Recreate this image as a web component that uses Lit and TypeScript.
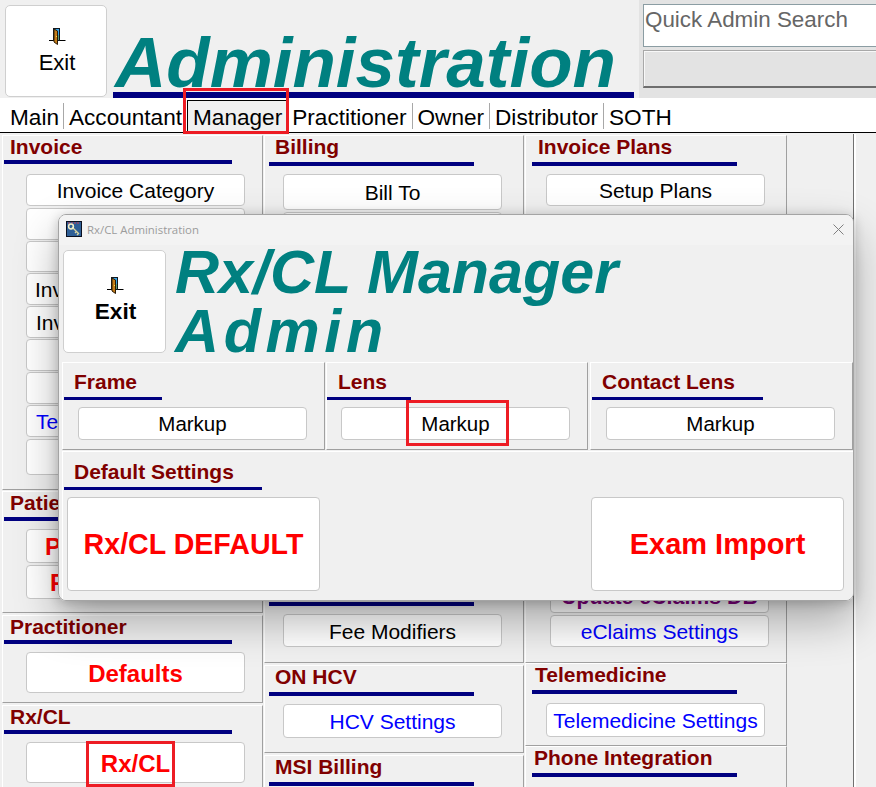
import { LitElement, html, css, nothing } from "lit";
import { customElement } from "lit/decorators.js";

// --- Types ---

type Tone = "black" | "red" | "blue" | "purple";

interface Btn {
  label?: string;
  h: number;
  gap: number; // space above the button
  tone?: Tone;
  bold?: boolean;
  textPad?: number; // only the start of the label shows next to the dialog
  dx?: number;
}

interface Section {
  title?: string;
  height: number;
  gapTop?: number;
  gapLeft?: number;
  width?: number;
  headH: number;
  headTop?: number;
  textX: number;
  ulX: number;
  ulW: number;
  btnX?: number;
  btnW?: number;
  buttons?: Btn[];
}

// --- Data ---

const b = (label: string | undefined, h: number, gap: number, extra: Partial<Btn> = {}): Btn => ({
  label, h, gap, ...extra,
});

const COLUMNS: { cls: string; sections: Section[] }[] = [
  {
    cls: "col-a",
    sections: [
      {
        title: "Invoice", height: 355, headH: 24, textX: 6, ulX: 1, ulW: 228, btnX: 23, btnW: 219,
        buttons: [
          b("Invoice Category", 32, 10),
          b(undefined, 32, 2),
          b(undefined, 31, 1),
          b("Inv", 32, 1, { textPad: 8 }),
          b("Inv", 32, 1, { textPad: 9 }),
          b(undefined, 32, 1),
          b(undefined, 32, 1),
          b("Te", 32, 1, { tone: "blue", textPad: 9 }),
          b(undefined, 36, 2),
        ],
      },
      {
        title: "Patient", height: 122, gapTop: 1, headH: 25, textX: 6, ulX: 1, ulW: 228, btnX: 23, btnW: 219,
        buttons: [
          b("P", 34, 8, { tone: "red", bold: true, textPad: 18 }),
          b("P", 34, 2, { tone: "red", bold: true, textPad: 23 }),
        ],
      },
      {
        title: "Practitioner", height: 88, gapTop: 2, headH: 24, textX: 6, ulX: 1, ulW: 228, btnX: 23, btnW: 219,
        buttons: [b("Defaults", 41, 8, { tone: "red", bold: true })],
      },
      {
        title: "Rx/CL", height: 90, gapTop: 2, headH: 24, textX: 6, ulX: 1, ulW: 228, btnX: 23, btnW: 219,
        buttons: [b("Rx/CL", 41, 8, { tone: "red", bold: true })],
      },
    ],
  },
  {
    cls: "col-b",
    sections: [
      {
        title: "Billing", height: 439, headH: 26, textX: 6, ulX: 4, ulW: 205, btnX: 18, btnW: 219,
        buttons: [b("Bill To", 36, 8), b(undefined, 36, 2)],
      },
      {
        height: 87, gapTop: 2, headH: 25, textX: 6, ulX: 4, ulW: 205, btnX: 18, btnW: 219,
        buttons: [b("Fee Modifiers", 33, 8)],
      },
      {
        title: "ON HCV", height: 88, gapTop: 2, headH: 26, textX: 6, ulX: 4, ulW: 205, btnX: 18, btnW: 219,
        buttons: [b("HCV Settings", 34, 8, { tone: "blue" })],
      },
      { title: "MSI Billing", height: 60, gapTop: 2, headH: 26, textX: 6, ulX: 4, ulW: 205 },
    ],
  },
  {
    cls: "col-c",
    sections: [
      {
        title: "Invoice Plans", height: 528, headH: 26, textX: 6, ulX: 6, ulW: 205, btnX: 20, btnW: 219,
        buttons: [
          b("Setup Plans", 32, 8),
          b("Update eClaims DB", 32, 375, { tone: "purple", bold: true, dx: 4 }),
          b("eClaims Settings", 32, 2, { tone: "blue", dx: 4 }),
        ],
      },
      {
        title: "Telemedicine", height: 83, headH: 26, textX: 3, ulX: 6, ulW: 205, btnX: 20, btnW: 219,
        buttons: [b("Telemedicine Settings", 34, 9, { tone: "blue" })],
      },
      { title: "Phone Integration", height: 60, headH: 26, textX: 2, ulX: 6, ulW: 205 },
    ],
  },
];

const DIALOG_SECTIONS: Section[] = [
  {
    title: "Frame", height: 88, width: 263, headH: 34, headTop: 8, textX: 10, ulX: 1, ulW: 98, btnX: 15, btnW: 229,
    buttons: [b("Markup", 33, 7)],
  },
  {
    title: "Lens", height: 88, width: 262, gapLeft: 1, headH: 34, headTop: 8, textX: 11, ulX: 0, ulW: 84, btnX: 14, btnW: 229,
    buttons: [b("Markup", 33, 7)],
  },
  {
    title: "Contact Lens", height: 88, width: 263, gapLeft: 2, headH: 34, headTop: 8, textX: 10, ulX: 1, ulW: 171, btnX: 15, btnW: 229,
    buttons: [b("Markup", 33, 7)],
  },
];

const TABS = ["Main", "Accountant", "Manager", "Practitioner", "Owner", "Distributor", "SOTH"];

// --- Icons ---

const DOOR_ICON = html`<svg class="door" width="17" height="17" viewBox="0 0 17 17">
  <path d="M0 12.5h5M11 12.5h5.500" stroke="#000" stroke-width="1" fill="none" />
  <rect x="4.500" y="0.500" width="6" height="12" fill="#36a2e6" stroke="#101820" />
  <rect x="8" y="7" width="2" height="5" fill="#5f9a72" />
  <path d="M5 1L8.500 3V16.500L5 14Z" fill="#c47c18" stroke="#2b1a05" stroke-width="1" />
  <rect x="7" y="8" width="1" height="1" fill="#ffe14a" />
</svg>`;

const KEY_ICON = html`<svg class="key" width="16" height="16" viewBox="0 0 16 16">
  <rect x="0.500" y="0.500" width="15" height="15" fill="#2f5f96" stroke="#0a1020" />
  <path d="M2 2h12" stroke="#c83c50" stroke-width="1" stroke-dasharray="2 1" />
  <path d="M6 6L13 13M10.500 10.500L9 12M12.500 12.500L11 14" stroke="#d8d4a0" stroke-width="1.400" fill="none" />
  <circle cx="5" cy="5.500" r="2.400" fill="none" stroke="#f2efc8" stroke-width="1.500" />
</svg>`;

const CLOSE_ICON = html`<svg class="close" width="11" height="11" viewBox="0 0 11 11">
  <path d="M0.500 0.500L10.500 10.500M10.500 0.500L0.500 10.500" stroke="#808080" stroke-width="1" fill="none" />
</svg>`;

// --- Component ---

@customElement("app-root")
export class AppRoot extends LitElement {
  static styles = css`
    :host {
      display: block;
      width: 876px;
      height: 787px;
      overflow: hidden;
      font-family: "Liberation Sans", Arial, sans-serif;
      color: #000;
    }

    .page {
      position: relative;
      width: 876px;
      height: 787px;
      overflow: hidden;
      display: flex;
      flex-direction: column;
      background: #f0f0f0;
    }

    /* header */
    .header {
      display: flex;
      height: 98px;
      flex: none;
    }

    .exit {
      display: flex;
      flex-direction: column;
      align-items: center;
      justify-content: center;
      box-sizing: border-box;
      flex: none;
      padding-left: 2px;
      background: #fff;
      border: 1px solid #cfcfcf;
      border-radius: 5px;
    }

    .header .exit {
      width: 102px;
      height: 92px;
      margin: 5px 0 0 5px;
      font-size: 22px;
      line-height: 24px;
      gap: 6px;
    }

    .door {
      display: block;
    }

    .app-title {
      box-sizing: border-box;
      width: 521px;
      height: 98px;
      margin-left: 6px;
      padding: 34px 0 0 2px;
      border-bottom: 6px solid #000080;
      color: #008080;
      font-size: 71px;
      line-height: 58px;
      font-weight: bold;
      font-style: italic;
      white-space: nowrap;
      flex: none;
    }

    .search-area {
      flex: 1;
      margin-left: 5px;
      padding: 4px 0 0 4px;
      background: #e3e3e3;
      min-width: 0;
    }

    .search-input {
      box-sizing: border-box;
      height: 43px;
      padding: 1px 0 0 1px;
      background: #fff;
      border: 1px solid #8b9da3;
      border-right: none;
      color: #666;
      font-size: 22.4px;
      line-height: 27px;
      white-space: nowrap;
    }

    .search-btn {
      box-sizing: border-box;
      height: 38px;
      margin-top: 3px;
      background: #e3e3e3;
      border-top: 1px solid #a8a8a8;
      border-left: 1px solid #a8a8a8;
      border-bottom: 2px solid #6e6e6e;
      box-shadow: inset 1px 1px 0 #f8f8f8;
    }

    /* tabs */
    .tabs {
      display: flex;
      flex: none;
      box-sizing: content-box;
      height: 34px;
      padding-left: 5px;
      background: #fff;
      border-bottom: 1px solid #000;
      font-size: 22.6px;
    }

    .tab {
      height: 26px;
      margin-top: 5px;
      padding: 0 5px;
      border-left: 1px solid #a8a8a8;
      line-height: 30px;
      white-space: nowrap;
    }

    .tab.first {
      border-left: none;
      padding-right: 4px;
    }

    .tab.active {
      height: 32px;
      margin-top: 2px;
      padding-top: 3px;
      box-sizing: border-box;
      background: #f0f0f0;
      border-left: 1px solid #000;
      border-top: 1px solid #000;
      line-height: 27px;
    }

    .tab.after-active {
      border-left: none;
      padding-left: 5px;
    }

    /* columns */
    .columns {
      display: flex;
      flex: 1;
      gap: 1px;
      min-height: 0;
      padding: 2px 0 0 2px;
    }

    .col-a {
      width: 261px;
    }

    .col-b {
      width: 260px;
    }

    .col-c {
      width: 262px;
    }

    .rail {
      width: 1px;
      margin-left: 65px;
      margin-top: -1px;
      background: #707070;
      border-right: 2px solid #fff;
    }

    .section {
      box-sizing: border-box;
      background: #f0f0f0;
      border-top: 1px solid #fff;
      border-left: 1px solid #fff;
      border-right: 1px solid #a0a0a0;
      border-bottom: 1px solid #a0a0a0;
      overflow: hidden;
    }

    .head {
      box-sizing: content-box;
      border-bottom: 4px solid #000080;
      color: #800000;
      font-size: 21px;
      line-height: 21px;
      font-weight: bold;
      white-space: nowrap;
    }

    .dialog .head {
      border-bottom-width: 3px;
    }

    .btn {
      box-sizing: border-box;
      display: flex;
      align-items: center;
      justify-content: center;
      overflow: hidden;
      background: #fff;
      border: 1px solid #c8c8c8;
      border-radius: 4px;
      font-size: 21px;
      white-space: nowrap;
    }

    .columns .btn {
      padding-top: 2px;
    }

    .columns .btn.purple {
      padding-top: 0;
    }

    .dialog-row .btn {
      font-size: 20.5px;
    }

    .btn.clipped {
      justify-content: flex-start;
    }

    .btn.bold {
      font-weight: bold;
      font-size: 24px;
    }

    .btn.purple.bold {
      font-size: 21.33px;
      color: #800080;
    }

    .red {
      color: #ff0000;
    }

    .blue {
      color: #0000ff;
    }

    /* dialog */
    .dialog {
      position: absolute;
      left: 58px;
      top: 214px;
      width: 796px;
      height: 387px;
      box-sizing: border-box;
      display: flex;
      flex-direction: column;
      overflow: hidden;
      background: #f0f0f0;
      border: 1px solid #a4a4a4;
      border-radius: 8px;
    }

    .dialog-shadow {
      position: absolute;
      left: 58px;
      top: 214px;
      width: 796px;
      height: 387px;
      border-radius: 8px;
      box-shadow: 0 2px 12px rgba(0, 0, 0, 0.2), 0 20px 44px rgba(0, 0, 0, 0.3);
    }

    .titlebar {
      display: flex;
      align-items: center;
      flex: none;
      box-sizing: border-box;
      height: 30px;
      padding: 0 9px 2px 7px;
      background: #f3f3f3;
      color: #9c9c9c;
      font-family: "Open Sans", sans-serif;
      font-size: 11.4px;
    }

    .key {
      margin-right: 5px;
      flex: none;
    }

    .close {
      margin-left: auto;
    }

    .dialog-top {
      display: flex;
      flex: none;
      height: 103px;
      margin: 5px 0 9px 4px;
    }

    .dialog-top .exit {
      width: 103px;
      height: 103px;
      padding-bottom: 3px;
      font-size: 22.67px;
      line-height: 24px;
      font-weight: bold;
      gap: 5px;
    }

    .dialog-title {
      margin: -7px 0 0 9px;
      color: #008080;
      font-size: 61px;
      line-height: 59px;
      font-weight: bold;
      font-style: italic;
      white-space: nowrap;
    }

    .spaced {
      letter-spacing: 4.6px;
    }

    .dialog-row {
      display: flex;
      flex: none;
      margin-left: 3px;
    }

    .defaults {
      flex: 1;
      margin: 1px 0 0 3px;
      background: #f0f0f0;
      border-top: 1px solid #fff;
      border-left: 1px solid #fff;
    }

    .default-btns {
      display: flex;
      justify-content: space-between;
      width: 777px;
      margin: 7px 0 0 4px;
    }

    .big {
      width: 253px;
      height: 94px;
      font-size: 29px;
      font-weight: bold;
      color: #ff0000;
    }

    .big.tight {
      font-size: 28.6px;
    }

    /* red call-outs drawn over the screenshot */
    .mark {
      position: absolute;
      box-sizing: border-box;
      border: 3px solid #ed1c24;
    }

    .mark-tab {
      left: 183px;
      top: 88px;
      width: 106px;
      height: 46px;
    }

    .mark-rx {
      left: 86px;
      top: 741px;
      width: 89px;
      height: 46px;
    }

    .mark-lens {
      left: 406px;
      top: 400px;
      width: 103px;
      height: 46px;
    }
  `;

  private renderButton(btn: Btn, s: Section) {
    const cls = [
      "btn",
      btn.tone ?? "",
      btn.bold ? "bold" : "",
      btn.textPad !== undefined ? "clipped" : "",
    ].join(" ");
    const left = (s.btnX ?? 0) + (btn.dx ?? 0);
    const pad = btn.textPad !== undefined ? `padding-left:${btn.textPad}px;` : "";
    return html`<div
      class=${cls}
      style="width:${s.btnW}px;height:${btn.h}px;margin:${btn.gap}px 0 0 ${left}px;${pad}"
    >
      ${btn.label ?? nothing}
    </div>`;
  }

  private renderHead(title: string | undefined, s: Pick<Section, "headH" | "headTop" | "textX" | "ulX" | "ulW">) {
    const top = s.headTop ?? 0;
    return html`<div
      class="head"
      style="width:${s.ulW - s.textX}px;height:${s.headH - top}px;margin-left:${s.ulX}px;padding:${top}px 0 0 ${s.textX}px"
    >
      ${title ?? nothing}
    </div>`;
  }

  private renderSection(s: Section) {
    const width = s.width ? `width:${s.width}px;` : "";
    return html`<section
      class="section"
      style="height:${s.height}px;margin:${s.gapTop ?? 0}px 0 0 ${s.gapLeft ?? 0}px;${width}"
    >
      ${this.renderHead(s.title, s)} ${(s.buttons ?? []).map((btn) => this.renderButton(btn, s))}
    </section>`;
  }

  render() {
    return html`
      <div class="page">
        <header class="header">
          <div class="exit">${DOOR_ICON}<span>Exit</span></div>
          <div class="app-title">Administration</div>
          <div class="search-area">
            <div class="search-input">Quick Admin Search</div>
            <div class="search-btn"></div>
          </div>
        </header>

        <nav class="tabs">
          ${TABS.map((t, i) => {
            const cls = [
              "tab",
              i === 0 ? "first" : "",
              i === 2 ? "active" : "",
              i === 3 ? "after-active" : "",
            ].join(" ");
            return html`<div class=${cls}>${t}</div>`;
          })}
        </nav>

        <div class="columns">
          ${COLUMNS.map(
            (c) => html`<div class=${c.cls}>${c.sections.map((s) => this.renderSection(s))}</div>`,
          )}
          <div class="rail"></div>
        </div>

        <div class="mark mark-tab"></div>
        <div class="mark mark-rx"></div>

        <div class="dialog-shadow"></div>
        <div class="dialog">
          <div class="titlebar">${KEY_ICON}<span>Rx/CL Administration</span>${CLOSE_ICON}</div>
          <div class="dialog-top">
            <div class="exit">${DOOR_ICON}<span>Exit</span></div>
            <div class="dialog-title">Rx/CL Manager<br /><span class="spaced">Admin</span></div>
          </div>
          <div class="dialog-row">${DIALOG_SECTIONS.map((s) => this.renderSection(s))}</div>
          <div class="defaults">
            ${this.renderHead("Default Settings", { headH: 35, headTop: 9, textX: 10, ulX: 1, ulW: 198 })}
            <div class="default-btns">
              <div class="btn big tight">Rx/CL DEFAULT</div>
              <div class="btn big">Exam Import</div>
            </div>
          </div>
        </div>

        <div class="mark mark-lens"></div>
      </div>
    `;
  }
}
